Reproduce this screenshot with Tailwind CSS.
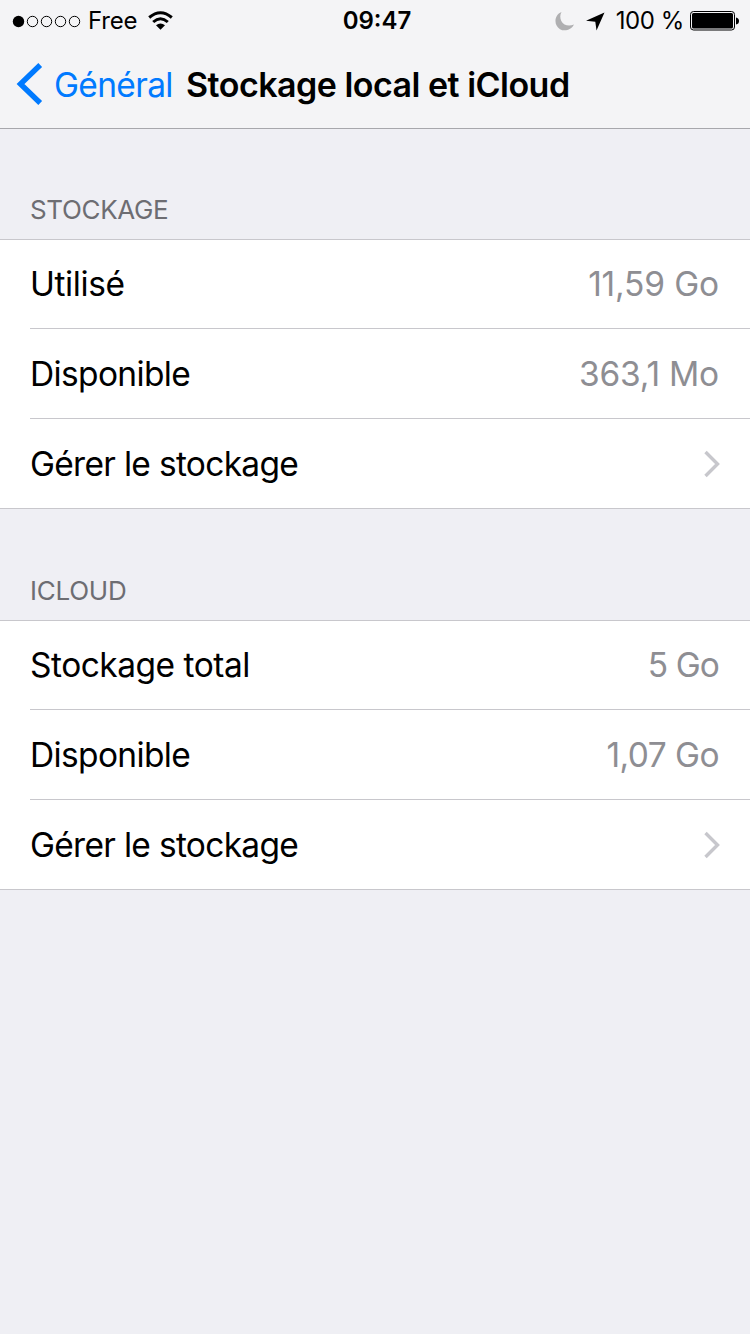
<!DOCTYPE html>
<html lang="fr">
<head>
<meta charset="utf-8">
<title>Stockage local et iCloud</title>
<script src="https://cdn.jsdelivr.net/npm/@tailwindcss/browser@4"></script>
</head>
<body class="w-[750px] h-[1334px] overflow-hidden bg-[#efeff4] font-['Inter','Liberation_Sans',sans-serif] text-black">
<header class="h-[129px] bg-[#f4f4f6] border-b border-[#a7a7ac]">
  <div class="h-10 grid grid-cols-3 items-center text-[24px] leading-10 whitespace-nowrap">
    <div class="flex items-center pl-3">
      <svg class="w-[69px] h-10" viewBox="0 0 69 40" fill="none" stroke="#000"><circle cx="6.500" cy="20.500" r="5.700" fill="#000" stroke="none"/><circle cx="20.500" cy="20.500" r="5.200"/><circle cx="34.500" cy="20.500" r="5.200"/><circle cx="48.500" cy="20.500" r="5.200"/><circle cx="62.500" cy="20.500" r="5.200"/></svg>
      <span class="ml-[7px] w-[50px] pt-px tracking-[-0.2px]">Free</span>
      <svg class="ml-[10px] w-[26px] h-10" viewBox="0 0 26 40" fill="none" stroke="#000" stroke-width="3"><path d="M1.200 16.500Q12.500 7 23.800 16.500M5.200 21Q12.500 14.500 19.800 21"/><path d="M8 24.300Q12.500 20.700 17 24.300L12.500 28.700Z" fill="#000" stroke="none"/></svg>
    </div>
    <div class="text-center font-semibold pt-px pl-1">09:47</div>
    <div class="flex items-center justify-end pr-[11px]">
      <svg class="w-5 h-5 mr-[11px]" viewBox="0 0 20 20"><path d="M6.500 1C-1 4-1.500 14.500 5 18.200C10 21 16.500 18.500 19 13.500C14 15.500 8.500 14.500 6.300 10C4.800 7 5 3.500 6.500 1Z" fill="#afafb1"/></svg>
      <svg class="w-5 h-5 mr-[10px]" viewBox="0 0 20 20"><path d="M18.500 1.500L0 9.700L9.300 10.700L10.500 19.500Z"/></svg>
      <span class="pt-px tracking-[-0.4px]">100 %</span>
      <svg class="ml-[6px] w-[49px] h-5" viewBox="0 0 49 20"><rect x=".5" y=".5" width="44" height="18.500" rx="3" fill="none" stroke="#000"/><rect x="2" y="2" width="41" height="15.500" rx="1.500"/><path d="M46 6.500Q49 7 49 10Q49 13 46 13.500Z"/></svg>
    </div>
  </div>
  <div class="h-[88px] flex items-center pl-4 text-[34px] whitespace-nowrap">
    <svg class="w-[27px] h-[42px]" viewBox="0 0 27 42" fill="none" stroke="#007aff" stroke-width="5.400"><path d="M24.200 2L4.500 21L24.200 40"/></svg>
    <span class="ml-[11px] w-[132px] pt-0.5 text-[#007aff] text-[33.5px] tracking-[-0.65px]">Général</span>
    <h1 class="font-semibold tracking-[-0.52px]">Stockage local et iCloud</h1>
  </div>
</header>
<main class="whitespace-nowrap">
  <section>
    <h2 class="h-[110px] pt-[62px] pl-[30px] text-[26px] leading-[38px] text-[#6d6d72] tracking-[-0.35px]">STOCKAGE</h2>
    <div class="bg-white border-y border-[#c8c7cc] pl-[30px] text-[33.5px]">
      <div class="h-[89px] border-b border-[#c8c7cc] pr-[31px] flex items-center justify-between"><span class="tracking-[-0.4px]">Utilisé</span><span class="text-[#8e8e93] tracking-[-0.15px]">11,59 Go</span></div>
      <div class="h-[90px] border-b border-[#c8c7cc] pt-px pr-[31px] flex items-center justify-between"><span class="tracking-[-0.65px]">Disponible</span><span class="text-[#8e8e93] tracking-[-0.2px]">363,1 Mo</span></div>
      <div class="h-[89px] pt-px pr-[29px] flex items-center justify-between"><span class="tracking-[-0.7px]">Gérer le stockage</span><svg class="w-[18px] h-[28px]" viewBox="0 0 18 28" fill="none" stroke="#c7c7cc" stroke-width="3.400"><path d="M2.500 2L14.500 14L2.500 26"/></svg></div>
    </div>
  </section>
  <section>
    <h2 class="h-[111px] pt-[63px] pl-[30px] text-[26px] leading-[38px] text-[#6d6d72] tracking-[-0.25px]">ICLOUD</h2>
    <div class="bg-white border-y border-[#c8c7cc] pl-[30px] text-[33.5px]">
      <div class="h-[89px] border-b border-[#c8c7cc] pr-[31px] flex items-center justify-between"><span class="tracking-[-0.5px]">Stockage total</span><span class="text-[#8e8e93] tracking-[-0.9px]">5 Go</span></div>
      <div class="h-[90px] border-b border-[#c8c7cc] pt-px pr-[31px] flex items-center justify-between"><span class="tracking-[-0.65px]">Disponible</span><span class="text-[#8e8e93] tracking-[-0.55px]">1,07 Go</span></div>
      <div class="h-[89px] pt-px pr-[29px] flex items-center justify-between"><span class="tracking-[-0.7px]">Gérer le stockage</span><svg class="w-[18px] h-[28px]" viewBox="0 0 18 28" fill="none" stroke="#c7c7cc" stroke-width="3.400"><path d="M2.500 2L14.500 14L2.500 26"/></svg></div>
    </div>
  </section>
</main>
</body>
</html>
